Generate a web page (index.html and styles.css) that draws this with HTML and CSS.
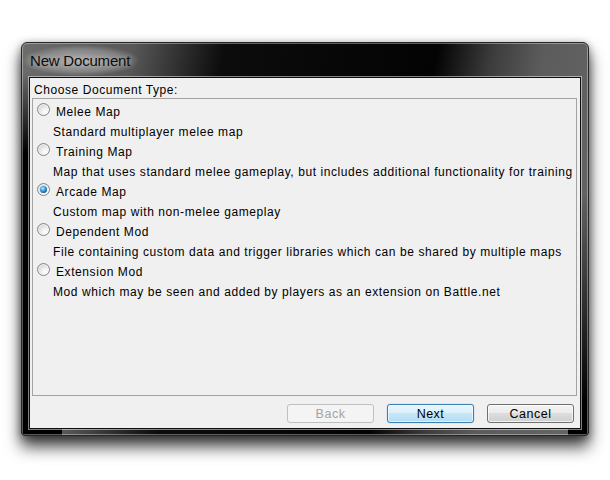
FILE: index.html
```html
<!DOCTYPE html>
<html>
<head>
<meta charset="utf-8">
<link rel="stylesheet" href="styles.css">
</head>
<body>
<div class="window">
  <div class="titlebar"><span class="title">New Document</span></div>
  <div class="client">
    <div class="label">Choose Document Type:</div>
    <div class="list">
      <div class="item">
        <div class="opt"><span class="radio"></span><span class="name">Melee Map</span></div>
        <div class="desc">Standard multiplayer melee map</div>
      </div>
      <div class="item">
        <div class="opt"><span class="radio"></span><span class="name">Training Map</span></div>
        <div class="desc">Map that uses standard melee gameplay, but includes additional functionality for training</div>
      </div>
      <div class="item">
        <div class="opt"><span class="radio checked"></span><span class="name">Arcade Map</span></div>
        <div class="desc">Custom map with non-melee gameplay</div>
      </div>
      <div class="item">
        <div class="opt"><span class="radio"></span><span class="name">Dependent Mod</span></div>
        <div class="desc">File containing custom data and trigger libraries which can be shared by multiple maps</div>
      </div>
      <div class="item">
        <div class="opt"><span class="radio"></span><span class="name">Extension Mod</span></div>
        <div class="desc">Mod which may be seen and added by players as an extension on Battle.net</div>
      </div>
    </div>
    <div class="buttons">
      <button class="btn btn-disabled">Back</button>
      <button class="btn btn-default">Next</button>
      <button class="btn">Cancel</button>
    </div>
  </div>
</div>
</body>
</html>
```

FILE: styles.css
```css
html, body {
  margin: 0;
  background: #ffffff;
}
body {
  width: 610px;
  height: 480px;
  overflow: hidden;
  padding: 42px 0 0 21px;
  box-sizing: border-box;
  font-family: "Liberation Sans", Arial, sans-serif;
  font-size: 12px;
  color: #000;
}
.window {
  box-sizing: border-box;
  width: 568px;
  height: 394px;
  border: 1px solid #262626;
  border-radius: 6px 6px 3px 3px;
  padding: 0 7px 6px;
  display: flex;
  flex-direction: column;
  box-shadow: inset 0 0 0 1px rgba(255,255,255,0.35),
              0 11px 16px rgba(0,0,0,0.72),
              0 2px 9px rgba(0,0,0,0.4);
  background:
    linear-gradient(to bottom, rgba(0,0,0,0) 30px, #000 110px) left top / 40px 100% no-repeat,
    linear-gradient(to bottom, rgba(0,0,0,0) 150px, #000 360px) right top / 20px 100% no-repeat,
    linear-gradient(100deg, #6c6c6c 0px, #585858 110px, #0c0c0c 200px, #030303 410px, #3c3c3c 465px, #5c5c5c 515px, #676767 100%);
}
.titlebar {
  height: 34px;
  margin: 0 -7px;
  display: flex;
  align-items: center;
}
.title {
  font-size: 15px;
  padding: 7px 10px 7px 8px;
  color: #0c0c0c;
  letter-spacing: -0.2px;
  background: radial-gradient(closest-side, rgba(215,215,215,0.6), rgba(215,215,215,0.3) 70%, rgba(215,215,215,0));
  text-shadow: 0 0 6px rgba(255,255,255,0.55);
}
.client {
  flex: 1;
  background: #f0f0f0;
  border: 1px solid #0e0e0e;
  box-shadow: 0 0 0 1px rgba(255,255,255,0.5);
  display: flex;
  flex-direction: column;
  letter-spacing: 0.58px;
}
.label {
  padding: 5px 0 0 4px;
  line-height: 15px;
}
.list {
  box-sizing: border-box;
  height: 298px;
  margin: 0 3px 0 2px;
  border: 1px solid #a3a3a3;
  padding-top: 3px;
}
.item {
  display: flex;
  flex-direction: column;
}
.opt {
  height: 20px;
  display: flex;
  align-items: flex-start;
  line-height: 20px;
}
.radio {
  box-sizing: border-box;
  width: 13px;
  height: 13px;
  margin: 1px 6px 0 4px;
  border-radius: 50%;
  border: 1px solid #858686;
  background: radial-gradient(circle at 65% 70%, #ffffff 0, #eeeeee 35%, #c8cacc 90%);
  box-shadow: inset 0 0 0 1px rgba(255,255,255,0.55);
  display: flex;
  align-items: center;
  justify-content: center;
}
.radio.checked::after {
  content: "";
  width: 7px;
  height: 7px;
  border-radius: 50%;
  background: radial-gradient(circle at 40% 35%, #c6ecff 0, #52b0ea 30%, #14609f 70%, #0a3a6c 100%);
}
.desc {
  height: 20px;
  line-height: 20px;
  padding-left: 20px;
  white-space: nowrap;
}
.buttons {
  margin-top: auto;
  padding: 0 6px 5px 0;
  display: flex;
  justify-content: flex-end;
  gap: 13px;
}
.btn {
  box-sizing: border-box;
  width: 87px;
  height: 19px;
  padding: 0;
  border-radius: 3px;
  font-family: inherit;
  font-size: 12.5px;
  letter-spacing: 0.5px;
  color: #000;
  border: 1px solid #707070;
  background: linear-gradient(to bottom, #f3f3f3 0, #ebebeb 50%, #dddddd 50%, #cfcfcf 100%);
  box-shadow: inset 0 0 0 1px rgba(255,255,255,0.7);
}
.btn-default {
  border-color: #3c7fb1;
  background: linear-gradient(to bottom, #eaf6fd 0, #d9effc 50%, #c5e6f8 50%, #b5dcf3 100%);
  box-shadow: inset 0 0 0 1px rgba(255,255,255,0.6), 0 0 1px #48a7e8;
}
.btn-disabled {
  color: #a3a3a3;
  border-color: #c0c0c0;
  background: #f4f4f4;
  box-shadow: none;
}
```
